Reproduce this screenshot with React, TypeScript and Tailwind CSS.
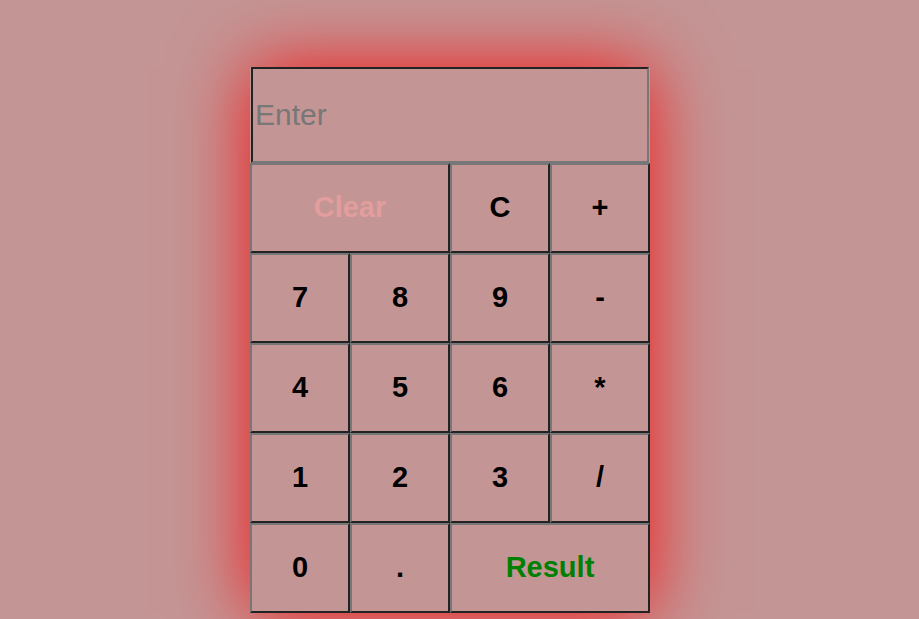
import { useState } from "react";

const keys: { label: string; span?: boolean; tone?: string }[] = [
  { label: "Clear", span: true, tone: "text-[#e29d9d]" },
  { label: "C" },
  { label: "+" },
  { label: "7" },
  { label: "8" },
  { label: "9" },
  { label: "-" },
  { label: "4" },
  { label: "5" },
  { label: "6" },
  { label: "*" },
  { label: "1" },
  { label: "2" },
  { label: "3" },
  { label: "/" },
  { label: "0" },
  { label: "." },
  { label: "Result", span: true, tone: "text-[#008000]" },
];

export default function App() {
  const [value, setValue] = useState("");

  const press = (k: string) => {
    if (k === "Clear") return setValue("");
    if (k === "C") return setValue((v) => v.slice(0, -1));
    if (k === "Result") {
      try {
        // eslint-disable-next-line no-new-func
        setValue(String(Function(`return (${value})`)()));
      } catch {
        setValue("Error");
      }
      return;
    }
    setValue((v) => v + k);
  };

  return (
    <div className="min-h-[619px] w-full bg-[#c49595] pt-[67px] pl-[250px] font-['Liberation_Sans',Arial,sans-serif]">
      <div className="w-[400px] shadow-[0_0_70px_rgba(245,20,20,1)]">
        <input
          value={value}
          onChange={(e) => setValue(e.target.value)}
          placeholder="Enter"
          className="ml-px block h-[96px] w-[398px] border-2 border-t-[#222] border-l-[#222] border-b-[#777] border-r-[#777] bg-transparent px-[2px] text-[30px] text-black outline-none placeholder:text-[#777]"
        />
        <div className="grid grid-cols-[repeat(4,100px)] grid-rows-[repeat(5,90px)]">
          {keys.map((k) => (
            <button
              key={k.label}
              onClick={() => press(k.label)}
              className={`border-2 border-t-[#777] border-l-[#777] border-b-[#222] border-r-[#222] bg-transparent text-[29px] font-bold ${
                k.span ? "col-span-2" : ""
              } ${k.tone ?? "text-black"}`}
            >
              {k.label}
            </button>
          ))}
        </div>
      </div>
    </div>
  );
}
